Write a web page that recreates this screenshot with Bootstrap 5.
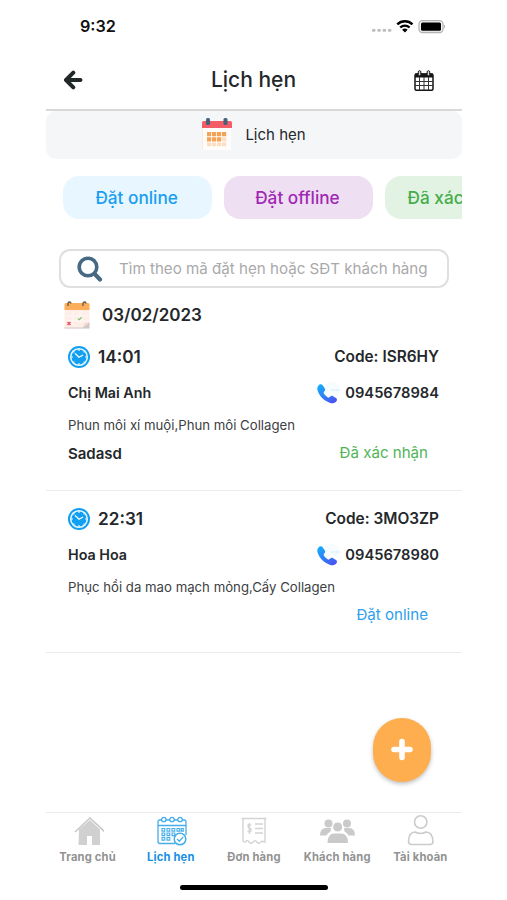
<!DOCTYPE html>
<html lang="vi">
<head>
<meta charset="utf-8">
<meta name="viewport" content="width=device-width, initial-scale=1">
<title>Lịch hẹn</title>
<link href="https://cdn.jsdelivr.net/npm/bootstrap@5.3.0/dist/css/bootstrap.min.css" rel="stylesheet">
<style>
body{font-family:Inter,"Liberation Sans",sans-serif;color:#24282b;background:#fff;line-height:1}
svg{display:block;flex:none}
.phone{width:416px;height:900px;margin-left:46px}
.phone *{white-space:nowrap}
.statusbar{height:54px;padding:0 17px 2px 34px}
.clock{font-size:16.2px;font-weight:600;color:#111}
.topbar{height:57px;padding:0 28px 3px 17px;border-bottom:2px solid #d8d8d9}
.topbar h1{font-size:21px;font-weight:500;padding-left:10px}
.section-tab{height:48px;background:#f4f6f8;border-radius:10px;gap:12px;font-size:15px;padding-right:1px}
.section-tab span{padding-bottom:2px}
.chips{margin-top:17px;padding-left:17px;gap:11.5px;height:43px}
.chip{width:149.3px;flex:none;border-radius:16px;font-size:17.2px;font-weight:500;padding:1px 2px 0 0}
.chip-on{background:#e8f6ff;color:#199ff0}
.chip-off{background:#efdff2;color:#9f28b4}
.chip-ok{background:#e3f3e3;color:#46ad4c}
.search{margin:30px 13px 0;height:39px;border:2px solid #dedfe1;border-radius:11px;padding-left:16px;gap:16px}
.search input{font-size:15.15px;width:325px;border:0;background:none;padding:0;color:#777;outline:0}
.search input::placeholder{color:#a9a9ab;opacity:1}
.date-row{height:28px;margin-top:13px;padding-left:18px;gap:12px;font-size:17px;font-weight:600}
.visit{height:162px;padding:9px 23px 0 22px;border-bottom:1px solid #ececed}
.r-time{height:37px}
.r-name{height:36px}
.r-svc{height:30px;font-size:13.2px;color:#3c4043}
.r-state{height:24px;padding-right:11px;font-size:15.1px}
.hour{font-size:17.2px;font-weight:600}
.code{font-size:15.4px;font-weight:600}
.person{font-size:14.3px;font-weight:600}
.tel{font-size:14.7px;font-weight:600}
.note{font-size:15px;font-weight:600}
.ok{color:#4fb456}.online{color:#2ea0ec}
.fab-row{padding:0 31px 0 0;margin-top:65px}
.fab{width:58px;height:64px;border-radius:29px;background:#ffae4f;border:0;padding:0;box-shadow:0 2px 4px rgba(0,0,0,.25)}
.tabs{margin-top:30px;height:64px;border-top:1px solid #ececed}
.tab{width:83.2px;color:#929292;font-size:11.2px;font-weight:700;letter-spacing:.18px;padding-top:2px}
.tab svg{margin-bottom:5px}
.tab-on{color:#168fe5}
.homebar{width:148px;height:5px;border-radius:3px;background:#000;margin:9px auto 0}
</style>
<script src="https://cdn.jsdelivr.net/npm/bootstrap@5.3.0/dist/js/bootstrap.bundle.min.js"></script>
</head>
<body>
<svg width="0" height="0" class="position-absolute" aria-hidden="true">
<defs>
<linearGradient id="call" x1="0" y1="0" x2=".8" y2="1"><stop offset="0" stop-color="#12b4fb"/><stop offset="1" stop-color="#4a52f2"/></linearGradient>
<symbol id="clockface" viewBox="0 0 22 22">
<circle cx="11" cy="11" r="11" fill="#119ff2"/><circle cx="11" cy="11" r="8.3" fill="none" stroke="#e9f7ff" stroke-width="1.5"/>
<path d="M11 3v2M11 17v2M3 11h2M17 11h2M5.400 5.400l1 1M15.600 15.600l1 1M16.600 5.400l-1 1M5.400 16.600l1-1" stroke="#dff3ff" stroke-width="1.2"/>
<path d="M7.300 7.600 11 11.200l3.600-2" fill="none" stroke="#fff" stroke-width="1.3" stroke-linecap="round"/>
</symbol>
<symbol id="phone" viewBox="0 0 24 24">
<circle cx="15" cy="9" r="8" fill="#f7fcff"/><path d="M14 9h9" stroke="#d6ecfc" stroke-width="1.5" stroke-dasharray="1.6 1"/>
<path d="M1.500 4.500C2.500 3.200 4.500 2.600 5.700 4.200L7.800 7.500c.7 1.200.3 2.100-.6 3-1 1-.4 2 .5 3.200 1 1.200 2.200 2.200 3.300 2.800.9.400 1.500-.2 2.300-1 .8-.7 1.700-.9 2.700-.3l3 1.900c1.300.9 1.200 2.300.3 3.300-1.500 1.700-3.800 2.200-6 1.500C7.500 20 2.300 15.200.5 9.200 0 7.400.4 5.800 1.500 4.500Z" fill="url(#call)"/>
</symbol>
</defs>
</svg>
<main class="phone d-flex flex-column overflow-hidden">
<div class="statusbar d-flex align-items-center justify-content-between">
<span class="clock">9:32</span>
<svg width="76" height="16" viewBox="0 0 76 16">
<g fill="#bdbdbd"><rect x="3" y="11" width="3.500" height="2.800" rx="1"/><rect x="8.300" y="11" width="3.500" height="2.800" rx="1"/><rect x="13.600" y="11" width="3.500" height="2.800" rx="1"/><rect x="18.900" y="11" width="3.500" height="2.800" rx="1"/></g>
<g fill="none" stroke="#000" stroke-width="2.300"><path d="M28.300 6.300a11 11 0 0 1 15.200 0"/><path d="M31.200 9.500a7 7 0 0 1 9.400 0"/></g><path d="M33.100 11.700a4.300 4.300 0 0 1 5.600 0L35.900 14.500Z"/>
<rect x="50" y="2.700" width="24" height="11.800" rx="3.500" fill="#f5f5f5" stroke="#b3b3b3" stroke-width="1.300"/><rect x="52" y="4.500" width="20" height="8.200" rx="1.500"/><path d="M75 6.500q2 2 0 4.200Z" fill="#aaa"/>
</svg>
</div>
<header class="topbar d-flex align-items-center justify-content-between">
<svg width="20" height="20" viewBox="0 0 20 20"><path d="M10.300 2.700 3 10l7.300 7.300M3.500 10h14" fill="none" stroke="#202829" stroke-width="4" stroke-linecap="round" stroke-linejoin="round"/></svg>
<h1 class="m-0">Lịch hẹn</h1>
<svg width="20" height="21" viewBox="0 0 20 21"><rect x="1" y="4" width="18" height="16.300" rx="1.500" fill="#fff" stroke="#151515" stroke-width="1.500"/><path d="M1 3.500h18v4H1z" fill="#151515"/><path d="M1 11.500h18M1 15.500h18M5.500 7v13M10 7v13M14.500 7v13" stroke="#333" stroke-width="1"/><g fill="#ddd" stroke="#151515"><rect x="4.300" y=".7" width="2.500" height="5" rx="1.200"/><rect x="13.200" y=".7" width="2.500" height="5" rx="1.200"/></g></svg>
</header>
<div class="section-tab d-flex align-items-center justify-content-center">
<svg width="32" height="34" viewBox="0 0 32 34"><path d="M1 9h29v23H1z" fill="#fffdfb"/><path d="M1 9h1v23H1z" fill="#fdeadb"/><path d="M2.500 3h27q1.500 0 1.500 1.500V10H1V4.500Q1 3 2.500 3Z" fill="#f35d68"/><g fill="#47617b"><rect x="5" y="0" width="4" height="7" rx="1.500"/><rect x="22.500" y="0" width="4" height="7" rx="1.500"/></g>
<g fill="#f3a257"><path d="M6 14h4.200v4.200H6zM11 14h4.200v4.200H11zM16 14h4.200v4.200H16zM21 14h4.200v4.200H21zM6 19.200h4.200v4.200H6zM11 19.200h4.200v4.200H11zM16 19.200h4.200v4.200H16z"/></g><g fill="#fcdfc3"><path d="M21 19.200h4.200v4.200H21zM6 24.400h4.200v3.800H6zM11 24.400h4.200v3.800H11zM16 24.400h4.200v3.800H16zM21 24.400h4.200v3.800H21z"/></g></svg>
<span>Lịch hẹn</span>
</div>
<nav class="chips d-flex flex-nowrap overflow-hidden flex-shrink-0">
<span class="chip chip-on d-flex align-items-center justify-content-center">Đặt online</span>
<span class="chip chip-off d-flex align-items-center justify-content-center">Đặt offline</span>
<span class="chip chip-ok d-flex align-items-center justify-content-center">Đã xác nhận</span>
</nav>
<label class="search d-flex align-items-center flex-shrink-0">
<svg width="26" height="26" viewBox="0 0 26 26"><circle cx="11" cy="11" r="8.800" fill="none" stroke="#466a83" stroke-width="3.600"/><path d="m17.700 18 5.300 5.500" stroke="#466a83" stroke-width="4.200" stroke-linecap="round"/></svg>
<input type="text" placeholder="Tìm theo mã đặt hẹn hoặc SĐT khách hàng">
</label>
<div class="date-row d-flex align-items-center">
<svg width="26" height="28" viewBox="0 0 26 28"><path d="M.5 6h25v21.500H.5z" fill="#fdeee8"/><path d="M.5 26.500h18l7-5v6H.5z" fill="#cfc8c8"/><path d="m18.500 27 2-5 5-1Z" fill="#f5dcd2"/><path d="M2 2h22q1.500 0 1.500 1.500V9H.5V3.500Q.5 2 2 2Z" fill="#fcae5b"/><path d="M4 5V2.500a1.500 1.500 0 0 1 3 0M19 5V2.500a1.500 1.500 0 0 1 3 0" fill="none" stroke="#65543f" stroke-width="1.300"/><path d="M9 10v14M16 10v12M2 15h22M2 20h22" stroke="#fff8f5"/><path d="m14 17.500 1.500 1.200 2-2.500" fill="none" stroke="#79c77a" stroke-width="1.200"/><path d="m3.500 21 3 3m0-3-3 3" stroke="#eb4c5e" stroke-width="1.300"/></svg>
<span class="date">03/02/2023</span>
</div>
<section class="visit">
<div class="r-time d-flex align-items-center justify-content-between"><span class="d-flex align-items-center"><svg width="22" height="22"><use href="#clockface"/></svg><span class="hour ps-1 ms-1">14:01</span></span><span class="code">Code: ISR6HY</span></div>
<div class="r-name d-flex align-items-center justify-content-between"><span class="person">Chị Mai Anh</span><span class="d-flex align-items-center gap-1"><svg width="24" height="24"><use href="#phone"/></svg><span class="tel">0945678984</span></span></div>
<div class="r-svc d-flex align-items-center"><span>Phun môi xí muội,Phun môi Collagen</span></div>
<div class="r-state d-flex align-items-center justify-content-between"><span class="note">Sadasd</span><span class="ok">Đã xác nhận</span></div>
</section>
<section class="visit">
<div class="r-time d-flex align-items-center justify-content-between"><span class="d-flex align-items-center"><svg width="22" height="22"><use href="#clockface"/></svg><span class="hour ps-1 ms-1">22:31</span></span><span class="code">Code: 3MO3ZP</span></div>
<div class="r-name d-flex align-items-center justify-content-between"><span class="person">Hoa Hoa</span><span class="d-flex align-items-center gap-1"><svg width="24" height="24"><use href="#phone"/></svg><span class="tel">0945678980</span></span></div>
<div class="r-svc d-flex align-items-center"><span>Phục hồi da mao mạch mỏng,Cấy Collagen</span></div>
<div class="r-state d-flex align-items-center justify-content-end"><span class="online">Đặt online</span></div>
</section>
<div class="fab-row d-flex justify-content-end">
<button class="fab d-flex align-items-center justify-content-center" aria-label="Thêm"><svg width="24" height="24" viewBox="0 0 24 24"><path d="M12 3.500v16M4 11.500h16" stroke="#fff" stroke-width="5.600" stroke-linecap="round"/></svg></button>
</div>
<nav class="tabs d-flex">
<a class="tab d-flex flex-column align-items-center text-decoration-none"><svg width="32" height="32" viewBox="0 0 32 32"><path d="M7 14.500 18 5l10 9.500V30h-8v-9h-5v9H6.500Z" fill="#d0d0d0"/><path d="M3 17 18 3l15 14" fill="none" stroke="#c7c7c7" stroke-width="1.600"/></svg><span>Trang chủ</span></a>
<a class="tab tab-on d-flex flex-column align-items-center text-decoration-none"><svg width="32" height="32" viewBox="0 0 32 32" fill="none" stroke="#45ade9" stroke-width="1.300"><path d="M20 28.500H5q-2 0-2-2V7q0-2 2-2h2M10.500 5h4.500M19 5h4M27 5h2q2 0 2 2v13M3 10.500h28"/><circle cx="8.800" cy="4.500" r="2.200"/><circle cx="17" cy="4.500" r="2.200"/><circle cx="25.100" cy="4.500" r="2.200"/><g stroke-width="1.100"><path d="M7 13.500h2.800v2.600H7zM12 13.500h2.800v2.600h-2.800zM17 13.500h2.800v2.600h-2.800zM22 13.500h2.800v2.600h-2.800zM7 18h2.800v2.600H7zM12 18h2.800v2.600h-2.800zM17 18h2.800v2.600h-2.800zM7 22.500h2.800v2.600H7zM12 22.500h2.800v2.600h-2.800zM26.300 13.500h2v2.600h-2z"/></g><circle cx="25" cy="24" r="5.800" fill="#fff" stroke-width="1.500"/><path d="m22 24 2.300 2.200 4-4.300"/></svg><span>Lịch hẹn</span></a>
<a class="tab d-flex flex-column align-items-center text-decoration-none"><svg width="32" height="32" viewBox="0 0 32 32" fill="none" stroke="#d4d4d4" stroke-width="1.400"><path d="M3.500 3.500h25M5 3.500V25q0 2 2.500 2 1.500-3 3.500 0 2 2.500 4 0 2-2.500 4 0 2 2.500 3.500 0 2-1.500 3.500 0h1V3.500"/><path d="M17 9h8M17 13.500h8M17 18h8"/><path d="M13 10.500q-3-2.500-3 .3 0 1.700 1.500 2.200Q13.500 14 13 16q-1 1.700-3.500 0M11.300 8v11"/></svg><span>Đơn hàng</span></a>
<a class="tab d-flex flex-column align-items-center text-decoration-none"><svg width="36" height="32" viewBox="0 0 36 32" fill="#cacaca"><circle cx="9.500" cy="8.500" r="4"/><circle cx="28" cy="8.500" r="4"/><path d="M1 20.500q0-7.500 6-7.500h5l-.5 3.500q-3 1.500-4 4ZM36 20.500q0-7.500-6-7.500h-5l.5 3.500q3 1.500 4 4Z"/><circle cx="18.700" cy="12" r="5" stroke="#fff"/><path d="M8.500 28q0-9.500 7-9.500h6.500q7 0 7 9.500Z"/></svg><span>Khách hàng</span></a>
<a class="tab d-flex flex-column align-items-center text-decoration-none"><svg width="32" height="32" viewBox="0 0 32 32" fill="none" stroke="#cbcbcb" stroke-width="1.600"><circle cx="16.700" cy="7" r="6.200"/><path d="M11 17q3 1.500 5.500 1.500T22 17q6.500 0 7 9.500 0 3-3 3H7.500q-3 0-3-3Q5 17 11 17Z"/></svg><span>Tài khoản</span></a>
</nav>
<div class="homebar"></div>
</main>
</body>
</html>
